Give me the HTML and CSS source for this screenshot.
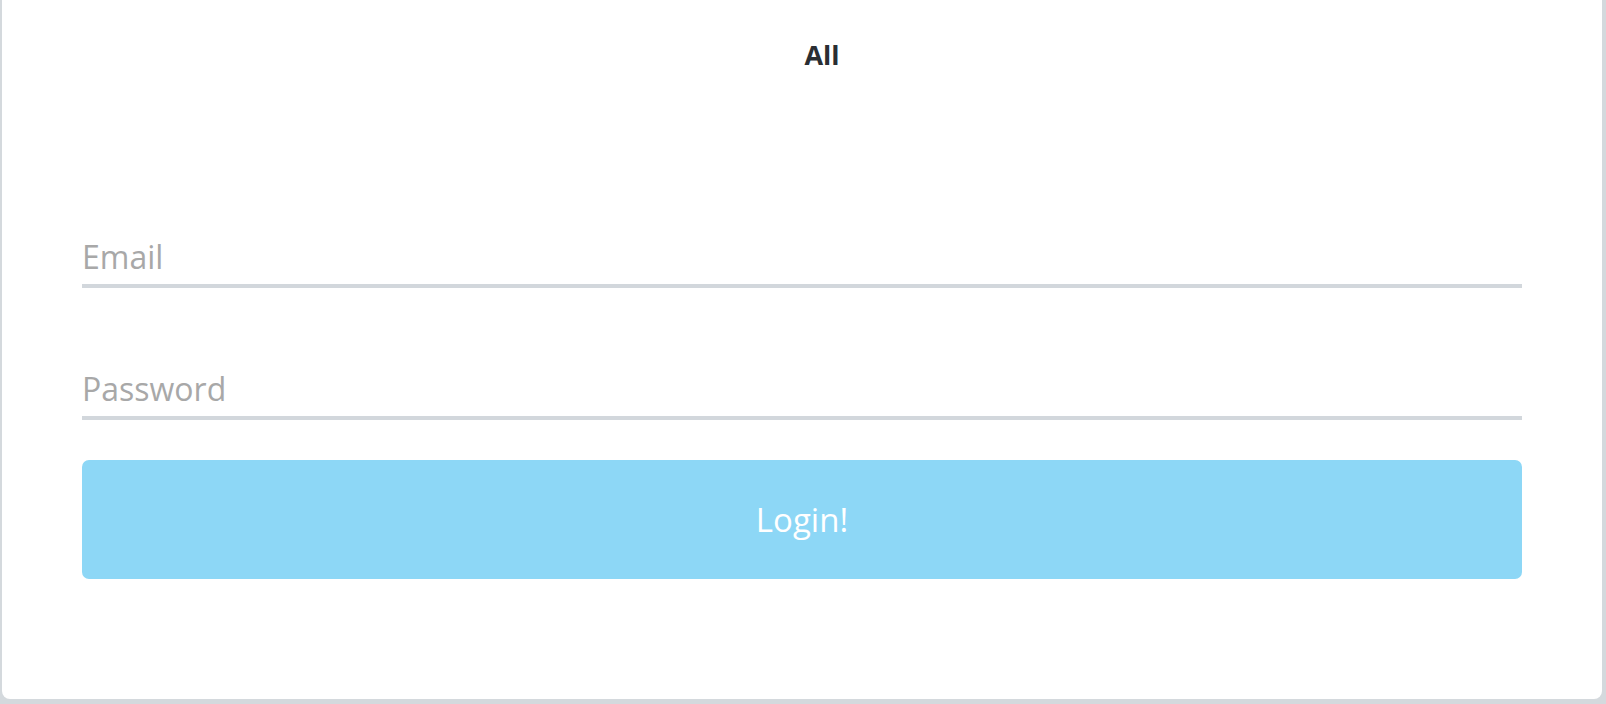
FILE: index.html
```html
<!DOCTYPE html>
<html>
<head>
<meta charset="utf-8">
<link rel="stylesheet" href="styles.css">
</head>
<body>
<div class="card">
  <h1 class="title">All</h1>
  <form class="form">
    <input class="field" type="email" placeholder="Email">
    <input class="field" type="password" placeholder="Password">
    <button class="btn" type="button">Login!</button>
  </form>
</div>
</body>
</html>
```
FILE: styles.css
```css
html, body {
  margin: 0;
  padding: 0;
  background: #d4d9dd;
  height: 100%;
  overflow: hidden;
}
body {
  font-family: "Open Sans", "DejaVu Sans", sans-serif;
}
.card {
  margin-left: 2px;
  width: 1600px;
  height: 699px;
  background: #ffffff;
  border-radius: 0 0 8px 8px;
  box-sizing: border-box;
  padding: 0 80px;
}
.title {
  margin: 0;
  padding-top: 38px;
  padding-left: 40px;
  text-align: center;
  font-size: 27px;
  line-height: 34px;
  font-weight: 700;
  color: #2a2e33;
  font-family: "Open Sans", "Liberation Sans", sans-serif;
}
.form {
  display: flex;
  flex-direction: column;
  gap: 72px;
  padding-top: 156px;
}
.field {
  display: block;
  width: 100%;
  height: 60px;
  box-sizing: border-box;
  border: none;
  border-bottom: 4px solid #d2d7dc;
  padding: 0;
  font-family: "Open Sans", sans-serif;
  font-size: 32px;
  color: #333;
  outline: none;
  background: transparent;
}
.field::placeholder {
  color: #a8a8a8;
  opacity: 1;
}
.btn {
  margin-top: -32px;
  height: 119px;
  width: 100%;
  border: none;
  border-radius: 7px;
  background: #8dd7f6;
  color: #ffffff;
  font-family: "Open Sans", sans-serif;
  font-size: 33px;
  font-weight: 500;
  cursor: pointer;
}
```
